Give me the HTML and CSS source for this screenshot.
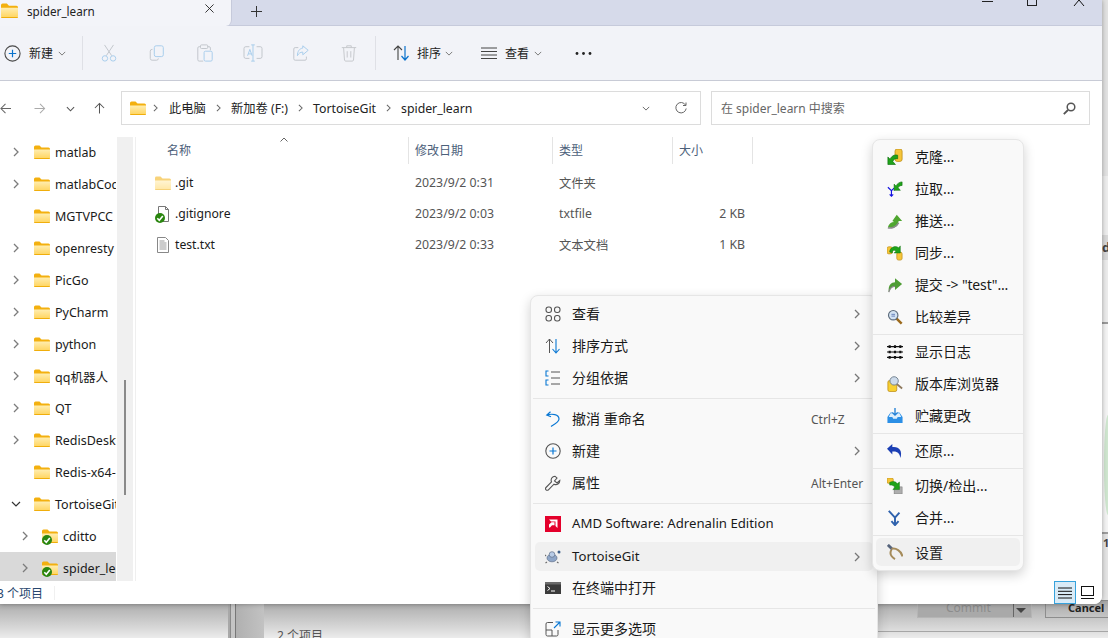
FILE: index.html
```html
<!DOCTYPE html>
<html lang="zh">
<head>
<meta charset="utf-8">
<title>spider_learn</title>
<link rel="stylesheet" href="styles.css">
</head>
<body>
<svg class="defs" aria-hidden="true">
  <defs>
    <linearGradient id="fg" x1="0" y1="0" x2="0" y2="1"><stop offset="0" stop-color="#ffedb0"/><stop offset="1" stop-color="#ffd45c"/></linearGradient>
    <symbol id="folder" viewBox="0 0 16 14"><path d="M0 2A1.500 1.500 0 0 1 1.500.5h4l2 2h7A1.500 1.500 0 0 1 16 4v2H0z" fill="#f3b00f"/><path d="M0 4.500h16V12.500a1.500 1.500 0 0 1-1.500 1.500h-13A1.500 1.500 0 0 1 0 12.500z" fill="url(#fg)"/><path d="M0 13h16a1 1 0 0 1-1 1H1a1 1 0 0 1-1-1z" fill="#f0ae0c"/></symbol>
    <symbol id="badge" viewBox="0 0 10 10"><circle cx="5" cy="5" r="5" fill="#2a860f"/><path d="M2.300 5.200 4.300 7.200 7.800 3.100" fill="none" stroke="#fff" stroke-width="1.600"/></symbol>
    <symbol id="cr" viewBox="0 0 6 10"><path d="M1 1l4 4-4 4" fill="none" stroke="currentColor" stroke-width="1.300"/></symbol>
    <symbol id="dn" viewBox="0 0 10 6"><path d="M1 1l4 4 4-4" fill="none" stroke="currentColor" stroke-width="1.200"/></symbol>
  </defs>
</svg>

<div class="backdrop">
  <div class="bd-side">
    <span class="bd-d">d</span>
    <span class="bd-green"></span>
    <span class="bd-one">1</span>
  </div>
  <div class="bd-bottom">
    <span class="bd-bars"></span>
    <span class="bd-count">2 个项目</span>
    <span class="bd-rule"></span>
    <span class="bd-commit">Commit<span class="bd-split"></span><span class="bd-drop"></span></span>
    <span class="bd-cancel">Cancel</span>
  </div>
</div>

<div class="window">
  <div class="tabbar">
    <div class="tab">
      <svg class="tab-folder"><use href="#folder"/></svg>
      <span class="tab-title">spider_learn</span>
      <svg class="tab-close" viewBox="0 0 10 10"><path d="M.5.500l9 9M9.500.500l-9 9" stroke="#222" fill="none"/></svg>
    </div>
    <svg class="tab-plus" viewBox="0 0 11 11"><path d="M5.500 0v11M0 5.500h11" stroke="#333" fill="none"/></svg>
    <div class="winctl">
      <span class="ctl-min"></span>
      <span class="ctl-max"></span>
      <svg class="ctl-close" viewBox="0 0 12 6"><path d="M1 6 6 0l5 6" stroke="#111" fill="none"/></svg>
    </div>
  </div>

  <div class="toolbar">
    <svg class="ic-new" viewBox="0 0 17 17"><circle cx="8.500" cy="8.500" r="7.600" fill="none" stroke="#4a4a4a" stroke-width="1.100"/><path d="M8.500 4.800v7.400M4.800 8.500h7.400" stroke="#0a72cc" stroke-width="1.200"/></svg>
    <span class="tb-text">新建</span>
    <svg class="tb-dn"><use href="#dn"/></svg>
    <span class="tb-sep tb-sep-a"></span>
    <div class="tb-slot"><svg class="tb-ic" viewBox="0 0 20 20"><path d="M5 1l8 12M15 1 7 13" stroke="#c2c6cc" fill="none" stroke-width="1.100"/><circle cx="5.500" cy="16" r="3" fill="none" stroke="#a9cdec" stroke-width="1.100"/><circle cx="14.500" cy="16" r="3" fill="none" stroke="#a9cdec" stroke-width="1.100"/></svg></div>
    <div class="tb-slot"><svg class="tb-ic" viewBox="0 0 20 20"><rect x="7" y="2" width="10" height="12" rx="2" fill="none" stroke="#a9cdec" stroke-width="1.100"/><path d="M5 6H4.500A2 2 0 0 0 2.500 8v8a2 2 0 0 0 2 2h5a2 2 0 0 0 2-2" fill="none" stroke="#c2c6cc" stroke-width="1.100"/></svg></div>
    <div class="tb-slot"><svg class="tb-ic" viewBox="0 0 20 20"><path d="M5 3H3.500A1.500 1.500 0 0 0 2 4.500v13A1.500 1.500 0 0 0 3.500 19H8M13 3h1.500A1.500 1.500 0 0 1 16 4.500V7" fill="none" stroke="#c2c6cc" stroke-width="1.100"/><rect x="5" y="1" width="8" height="4" rx="1" fill="none" stroke="#c2c6cc" stroke-width="1.100"/><rect x="9" y="8" width="9" height="11" rx="1.500" fill="none" stroke="#a9cdec" stroke-width="1.100"/></svg></div>
    <div class="tb-slot"><svg class="tb-ic-w" viewBox="0 0 22 20"><path d="M7 3H3a2 2 0 0 0-2 2v9a2 2 0 0 0 2 2h4M15 3h4a2 2 0 0 1 2 2v9a2 2 0 0 1-2 2h-4" fill="none" stroke="#c2c6cc" stroke-width="1.100"/><path d="M11 1v18M9 1h4M9 19h4" stroke="#a9cdec" fill="none" stroke-width="1.100"/><path d="M5 13l2.500-7L10 13M6 11h3" stroke="#a9cdec" fill="none" stroke-width="1.100"/></svg></div>
    <div class="tb-slot"><svg class="tb-ic" viewBox="0 0 20 20"><path d="M7 4H3.500A1.500 1.500 0 0 0 2 5.500v11A1.500 1.500 0 0 0 3.500 18h11a1.500 1.500 0 0 0 1.500-1.500V14" fill="none" stroke="#c2c6cc" stroke-width="1.100"/><path d="M12 2l6 5-6 5V9C9 9 7.500 10.500 6 13c0-5 2.500-8 6-8.500z" fill="none" stroke="#a9cdec" stroke-width="1.100"/></svg></div>
    <div class="tb-slot"><svg class="tb-ic" viewBox="0 0 20 20"><path d="M2 4h16M7.500 4V2h5v2M4 4l1 14a1.500 1.500 0 0 0 1.500 1h7a1.500 1.500 0 0 0 1.500-1l1-14M8 8v7M12 8v7" fill="none" stroke="#c6c8cc" stroke-width="1.100"/></svg></div>
    <span class="tb-sep tb-sep-b"></span>
    <svg class="ic-sort" viewBox="0 0 18 18"><path d="M5 16V2M1 6l4-4 4 4" fill="none" stroke="#444" stroke-width="1.100"/><path d="M12 2v14M8.500 12l3.500 4 3.500-4" fill="none" stroke="#0a72cc" stroke-width="1.200"/></svg>
    <span class="tb-text tb-text-sort">排序</span>
    <svg class="tb-dn tb-dn-sort"><use href="#dn"/></svg>
    <svg class="ic-view" viewBox="0 0 16 12"><path d="M0 1h16M0 4.500h16M0 8h16M0 11.500h16" stroke="#444" fill="none"/></svg>
    <span class="tb-text">查看</span>
    <svg class="tb-dn"><use href="#dn"/></svg>
    <svg class="ic-more" viewBox="0 0 17 3"><circle cx="2" cy="1.500" r="1.400" fill="#222"/><circle cx="8.500" cy="1.500" r="1.400" fill="#222"/><circle cx="15" cy="1.500" r="1.400" fill="#222"/></svg>
  </div>

  <div class="navbar">
    <svg class="nav-back" viewBox="0 0 12 12"><path d="M12 6H1M6 1 1 6l5 5" fill="none" stroke="#666" stroke-width="1.100"/></svg>
    <svg class="nav-fwd" viewBox="0 0 12 12"><path d="M0 6h11M6 1l5 5-5 5" fill="none" stroke="#aaa" stroke-width="1.100"/></svg>
    <svg class="nav-down"><use href="#dn"/></svg>
    <svg class="nav-up" viewBox="0 0 12 12"><path d="M6 12V1M1 6l5-5 5 5" fill="none" stroke="#555" stroke-width="1.100"/></svg>
    <div class="address">
      <svg class="addr-folder"><use href="#folder"/></svg>
      <svg class="crumb-cr crumb-cr-first"><use href="#cr"/></svg>
      <span>此电脑</span>
      <svg class="crumb-cr"><use href="#cr"/></svg>
      <span>新加卷 (F:)</span>
      <svg class="crumb-cr"><use href="#cr"/></svg>
      <span>TortoiseGit</span>
      <svg class="crumb-cr"><use href="#cr"/></svg>
      <span>spider_learn</span>
      <svg class="addr-down"><use href="#dn"/></svg>
      <svg class="addr-refresh" viewBox="0 0 12 12"><path d="M10.500 3A5.200 5.200 0 1 0 11.200 6.500M11 .5V3.500H8" fill="none" stroke="#666" stroke-width="1"/></svg>
    </div>
    <div class="search">
      <span class="search-text">在 spider_learn 中搜索</span>
      <svg class="search-ic" viewBox="0 0 13 13"><circle cx="8" cy="5" r="3.800" fill="none" stroke="#555" stroke-width="1.500"/><path d="M5 8 .8 12.200" stroke="#555" stroke-width="1.800"/></svg>
    </div>
  </div>

  <div class="content">
    <div class="sidebar">
      <div class="tree-row"><svg class="tree-cr"><use href="#cr"/></svg><svg class="tree-folder"><use href="#folder"/></svg><span>matlab</span></div>
      <div class="tree-row"><svg class="tree-cr"><use href="#cr"/></svg><svg class="tree-folder"><use href="#folder"/></svg><span>matlabCode</span></div>
      <div class="tree-row"><span class="tree-cr"></span><svg class="tree-folder"><use href="#folder"/></svg><span>MGTVPCC</span></div>
      <div class="tree-row"><svg class="tree-cr"><use href="#cr"/></svg><svg class="tree-folder"><use href="#folder"/></svg><span>openresty</span></div>
      <div class="tree-row"><svg class="tree-cr"><use href="#cr"/></svg><svg class="tree-folder"><use href="#folder"/></svg><span>PicGo</span></div>
      <div class="tree-row"><svg class="tree-cr"><use href="#cr"/></svg><svg class="tree-folder"><use href="#folder"/></svg><span>PyCharm</span></div>
      <div class="tree-row"><svg class="tree-cr"><use href="#cr"/></svg><svg class="tree-folder"><use href="#folder"/></svg><span>python</span></div>
      <div class="tree-row"><svg class="tree-cr"><use href="#cr"/></svg><svg class="tree-folder"><use href="#folder"/></svg><span>qq机器人</span></div>
      <div class="tree-row"><svg class="tree-cr"><use href="#cr"/></svg><svg class="tree-folder"><use href="#folder"/></svg><span>QT</span></div>
      <div class="tree-row"><svg class="tree-cr"><use href="#cr"/></svg><svg class="tree-folder"><use href="#folder"/></svg><span>RedisDesktop</span></div>
      <div class="tree-row"><span class="tree-cr"></span><svg class="tree-folder"><use href="#folder"/></svg><span>Redis-x64-5.0</span></div>
      <div class="tree-row"><svg class="tree-dn"><use href="#dn"/></svg><svg class="tree-folder"><use href="#folder"/></svg><span>TortoiseGit</span></div>
      <div class="tree-row tree-child"><svg class="tree-cr"><use href="#cr"/></svg><span class="badged"><svg class="tree-folder"><use href="#folder"/></svg><svg class="badge"><use href="#badge"/></svg></span><span>cditto</span></div>
      <div class="tree-row tree-child tree-sel"><svg class="tree-cr"><use href="#cr"/></svg><span class="badged"><svg class="tree-folder"><use href="#folder"/></svg><svg class="badge"><use href="#badge"/></svg></span><span>spider_learn</span></div>
    </div>
    <div class="side-scroll"><span class="side-thumb"></span></div>
    <div class="main">
      <div class="list-head">
        <div class="head-name">名称<svg class="sort-caret" viewBox="0 0 8 5"><path d="M.5 4.500 4 1l3.500 3.500" fill="none" stroke="#666"/></svg></div>
        <div class="head-cell">修改日期</div>
        <div class="head-cell">类型</div>
        <div class="head-cell head-last">大小</div>
      </div>
      <div class="list-row">
        <div class="cell-name"><svg class="file-ic file-faded"><use href="#folder"/></svg><span>.git</span></div>
        <div class="cell">2023/9/2 0:31</div><div class="cell">文件夹</div><div class="cell cell-size"></div>
      </div>
      <div class="list-row">
        <div class="cell-name">
          <span class="badged">
            <svg class="file-ic" viewBox="0 0 16 16"><path d="M3.500.5h7l3 3v12h-10z" fill="#fff" stroke="#777"/><path d="M10.500.5v3h3" fill="none" stroke="#777"/></svg>
            <svg class="badge badge-file"><use href="#badge"/></svg>
          </span><span>.gitignore</span>
        </div>
        <div class="cell">2023/9/2 0:03</div><div class="cell">txtfile</div><div class="cell cell-size">2 KB</div>
      </div>
      <div class="list-row">
        <div class="cell-name"><svg class="file-ic" viewBox="0 0 16 16"><path d="M2.500.5h8l3 3v12h-11z" fill="#fff" stroke="#888"/><path d="M4.500 4h5M4.500 6h7M4.500 8h7M4.500 10h7M4.500 12h7" stroke="#999" fill="none"/></svg><span>test.txt</span></div>
        <div class="cell">2023/9/2 0:33</div><div class="cell">文本文档</div><div class="cell cell-size">1 KB</div>
      </div>
    </div>
  </div>

  <div class="statusbar">
    <span class="status-text">3 个项目</span>
    <span class="status-sep"></span>
    <span class="view-btn view-on"><svg viewBox="0 0 14 12" class="view-ic"><path d="M0 1h14M0 4.300h14M0 7.600h14M0 11h14" stroke="#111" fill="none"/></svg></span>
    <span class="view-btn"><svg viewBox="0 0 13 13" class="view-ic2"><rect x=".5" y=".5" width="12" height="9" fill="none" stroke="#111"/><path d="M0 12.500h13" stroke="#111"/></svg></span>
  </div>
</div>

<div class="menu menu-main">
  <div class="mi"><svg class="mi-ic" viewBox="0 0 16 16"><g fill="none" stroke="#555" stroke-width="1.100"><rect x="1" y="1" width="5.500" height="5.500" rx="2.400"/><rect x="9.500" y="1" width="5.500" height="5.500" rx="2.400"/><rect x="1" y="9.500" width="5.500" height="5.500" rx="2.400"/><rect x="9.500" y="9.500" width="5.500" height="5.500" rx="2.400"/></g></svg><span class="mi-text">查看</span><svg class="mi-cr"><use href="#cr"/></svg></div>
  <div class="mi"><svg class="mi-ic" viewBox="0 0 16 16"><path d="M4.500 15V1M1 5l3.500-4L8 5" fill="none" stroke="#555"/><path d="M11 1v14M7.500 11l3.500 4 3.500-4" fill="none" stroke="#0a78d4" stroke-width="1.100"/></svg><span class="mi-text">排序方式</span><svg class="mi-cr"><use href="#cr"/></svg></div>
  <div class="mi"><svg class="mi-ic" viewBox="0 0 16 16"><path d="M6 2h9M6 8h9M6 14h9" stroke="#555" fill="none"/><path d="M3.500 1H1v5h2.500M3.500 10H1v5h2.500" stroke="#0a78d4" fill="none" stroke-width="1.100"/></svg><span class="mi-text">分组依据</span><svg class="mi-cr"><use href="#cr"/></svg></div>
  <div class="mi-sep"></div>
  <div class="mi"><svg class="mi-ic" viewBox="0 0 16 16"><path d="M5.500.8 1.800 4l4.200 1.800M2 4c5-1.500 12-.8 12 4 0 3-4 5-8 7.500" fill="none" stroke="#0a78d4" stroke-width="1.200"/></svg><span class="mi-text">撤消 重命名</span><span class="mi-key">Ctrl+Z</span></div>
  <div class="mi"><svg class="mi-ic" viewBox="0 0 16 16"><circle cx="8" cy="8" r="7.200" fill="none" stroke="#555" stroke-width="1.100"/><path d="M8 4.500v7M4.500 8h7" stroke="#0a78d4" stroke-width="1.200"/></svg><span class="mi-text">新建</span><svg class="mi-cr"><use href="#cr"/></svg></div>
  <div class="mi"><svg class="mi-ic" viewBox="0 0 16 16"><path d="M10 1.200A4 4 0 0 0 6.500 6.800L1 12.500a1.600 1.600 0 0 0 2.400 2.300L9 9.200a4 4 0 0 0 5.800-3.700L12 8 9.500 6 12 3z" fill="none" stroke="#555" stroke-width="1.100"/></svg><span class="mi-text">属性</span><span class="mi-key">Alt+Enter</span></div>
  <div class="mi-sep"></div>
  <div class="mi"><svg class="mi-ic" viewBox="0 0 16 16"><rect width="16" height="16" fill="#e4002b"/><path d="M4 3.500h8.500V12L10.500 10V5.500H6zM4 8.500 6.500 6.300h3v3H7L5 11.500H4z" fill="#fff"/></svg><span class="mi-text mi-latin">AMD Software: Adrenalin Edition</span></div>
  <div class="mi mi-hover"><svg class="mi-ic" viewBox="0 0 16 16"><ellipse cx="7" cy="9" rx="5" ry="3.800" fill="#8ea6c8" stroke="#5e6f88" stroke-width=".7"/><circle cx="7" cy="5.500" r="2.800" fill="#b7cbe6" stroke="#5e6f88" stroke-width=".7"/><path d="M1 7 0 6M2 13l-1.500 1M12 13l1.500 1" stroke="#6a6a6a" stroke-width="1.200"/><circle cx="14" cy="3" r="1.500" fill="#3e5f8a"/></svg><span class="mi-text mi-latin">TortoiseGit</span><svg class="mi-cr"><use href="#cr"/></svg></div>
  <div class="mi"><svg class="mi-ic" viewBox="0 0 16 12"><rect width="16" height="12" fill="#3b3b3b"/><rect width="16" height="2.500" fill="#6b6b6b"/><path d="M2.500 4.500 5 6.500l-2.500 2M6 9h4" stroke="#fff" fill="none"/></svg><span class="mi-text">在终端中打开</span></div>
  <div class="mi-sep"></div>
  <div class="mi"><svg class="mi-ic" viewBox="0 0 16 16"><path d="M8 1.500H2.500a1.500 1.500 0 0 0-1.500 1.500V13.500A1.500 1.500 0 0 0 2.500 15h9a1.500 1.500 0 0 0 1.500-1.500V9M1 9h6v6" fill="none" stroke="#555"/><path d="M9 7l6-6M10.500 1H15v4.500" fill="none" stroke="#0a78d4" stroke-width="1.100"/></svg><span class="mi-text">显示更多选项</span></div>
</div>

<div class="menu menu-sub">
  <div class="si"><svg class="si-ic" viewBox="0 0 18 18"><rect x="9" y="0" width="8" height="14" rx="2.500" fill="#f5c53a" stroke="#b8860b" stroke-width=".8"/><path d="M1 17.500V9L3.500 11.500C5 8 8 6 12 7V11C9 10.500 7.500 11.500 6.500 14L9.500 17.500Z" fill="#1fa31a" stroke="#0a6a0a" stroke-width=".7"/></svg><span>克隆...</span></div>
  <div class="si"><svg class="si-ic" viewBox="0 0 18 18"><path d="M1 7l4 4 3-3M5 11v6M3 15l2 2 2-2" fill="none" stroke="#1414e0" stroke-width="1.300"/><path d="M8 11V3.500L10 5.500C11.500 3 14 1 17 1V5C15 5 13.500 6 12.500 7.500L15 10.500H8Z" fill="#1fa31a" stroke="#0a6a0a" stroke-width=".6"/></svg><span>拉取...</span></div>
  <div class="si"><svg class="si-ic" viewBox="0 0 18 18"><path d="M1 16C2 12 5 10 8 10L6 9 11 2 17 9H13C13 13 10 17 5 17Z" fill="#4fa62f"/><path d="M1 16.500C4 17.500 10 17 13 11" fill="none" stroke="#8a8a8a" stroke-width="1.800"/></svg><span>推送...</span></div>
  <div class="si"><svg class="si-ic" viewBox="0 0 18 18"><rect x="0" y="2" width="6" height="8" rx="2" fill="#f5c53a" stroke="#b8860b" stroke-width=".7"/><rect x="11" y="8" width="6" height="9" rx="2" fill="#f5c53a" stroke="#b8860b" stroke-width=".7"/><path d="M3 8C3 3 9 0 13 3L15 1V9H8L10 7C8 5 6 6 6 9Z" fill="#1fa31a" stroke="#0a6a0a" stroke-width=".5"/></svg><span>同步...</span></div>
  <div class="si"><svg class="si-ic" viewBox="0 0 18 18"><path d="M2 17C1 9 5 6 9 6V1.500L17 8 9 14.500V10.500C6 10.500 4 12.500 2 17Z" fill="#4f9d35"/><path d="M2 17C3 13 6 10.500 9 10.500" fill="none" stroke="#888" stroke-width="1.500"/></svg><span class="si-tight">提交 -&gt; "test"...</span></div>
  <div class="si"><svg class="si-ic" viewBox="0 0 18 18"><path d="M10 10l6.500 6.500" stroke="#9c6a1c" stroke-width="2.800"/><circle cx="7" cy="7" r="5.300" fill="#d3e3f3" stroke="#5d6c7c" stroke-width="1.300"/><path d="M5 6h4M5 8h4" stroke="#5b78b4"/></svg><span>比较差异</span></div>
  <div class="si-sep"></div>
  <div class="si"><svg class="si-ic" viewBox="0 0 18 18"><path d="M0 3h18M0 9h18M0 15h18" stroke="#111" stroke-width="1.300" fill="none"/><path d="M3 1.500v3M9 1.500v3M15 1.500v3M3 7.500v3M9 7.500v3M15 7.500v3M3 13.500v3M9 13.500v3M15 13.500v3" stroke="#111" stroke-width="2.400" fill="none"/></svg><span>显示日志</span></div>
  <div class="si"><svg class="si-ic" viewBox="0 0 18 18"><rect x="1" y="5" width="10" height="12.500" rx="2" fill="#f8d030" stroke="#b8860b" stroke-width=".8"/><path d="M11 9l6 5" stroke="#8f7a5e" stroke-width="2"/><circle cx="8" cy="5.500" r="4.700" fill="#cddbeb" stroke="#74828f" stroke-width="1.100"/></svg><span>版本库浏览器</span></div>
  <div class="si"><svg class="si-ic" viewBox="0 0 18 18"><path d="M.5 10 4 5h2v3h6V5h2l3.500 5v7H.5z" fill="#2b8fe6"/><path d="M4 6H14L16 10H12L11 12H7L6 10H2Z" fill="#dceefc"/><path d="M9 0v8M6 5 9 8l3-3" stroke="#1f7fd6" stroke-width="1.500" fill="none"/></svg><span>贮藏更改</span></div>
  <div class="si-sep"></div>
  <div class="si"><svg class="si-ic" viewBox="0 0 18 18"><path d="M0 6.500 6 1V4.500C13 3.500 18 8 15 17 14.500 11.500 12 9 6 9.500V13Z" fill="#1b3fb4"/></svg><span>还原...</span></div>
  <div class="si-sep"></div>
  <div class="si"><svg class="si-ic" viewBox="0 0 18 18"><rect x="0" y="0" width="7" height="6" rx="1.500" fill="#f5c53a" stroke="#b8860b" stroke-width=".7"/><rect x="8" y="10" width="9" height="8" fill="#aeaeae" stroke="#777" stroke-width=".6"/><path d="M3 5C7 3 10 4 11.500 6.500L14 4.500V13H6.500L9 10.500C8 8.500 6 8 3 8Z" fill="#1fa31a" stroke="#0a6a0a" stroke-width=".5"/></svg><span>切换/检出...</span></div>
  <div class="si"><svg class="si-ic" viewBox="0 0 18 18"><path d="M2 1 9 8.500 14 3M9 8v8M5 12.500 9 17l4-4.500" fill="none" stroke="#2f62ad" stroke-width="2.200"/></svg><span>合并...</span></div>
  <div class="si-sep"></div>
  <div class="si si-hover"><svg class="si-ic" viewBox="0 0 18 18"><path d="M1 1 6 6" stroke="#56647c" stroke-width="3.200"/><path d="M5 5.500C10 4 16 8 17.500 14M5 6.500C3 10 4 14 9 17" fill="none" stroke="#a58b5a" stroke-width="2.200"/></svg><span>设置</span></div>
</div>
</body>
</html>
```
FILE: styles.css
```css
* { box-sizing: border-box; }
html, body { margin: 0; padding: 0; height: 100%; overflow: hidden; }
body {
  position: relative;
  width: 1108px;
  height: 638px;
  font-family: "Noto Sans", "Noto Sans CJK SC", sans-serif;
  font-size: 12px;
  color: #1a1a1a;
  background: #e6e6e6;
}
svg { display: block; flex: none; }
.defs { position: absolute; width: 0; height: 0; }

/* desktop behind the window */
.backdrop { position: absolute; inset: 0; overflow: hidden; }
.bd-side {
  position: absolute; left: 1102px; top: 0; width: 6px; height: 604px;
  background: linear-gradient(#e2e2e2 0, #e2e2e2 176px, #ededed 176px, #ededed 235px, #d8d8d8 235px, #d8d8d8 260px, #ececec 260px, #ececec 322px, #9b9b9b 322px, #9b9b9b 324px, #f4f4f4 324px, #f4f4f4 532px, #9e9e9e 532px, #9e9e9e 534px, #e4e4e4 534px);
}
.bd-d { position: absolute; left: 0; top: 238px; font-size: 13px; font-weight: 700; color: #444; }
.bd-green { position: absolute; left: 2px; top: 415px; width: 8px; height: 100px; background: #cfe6cf; border-radius: 50%; }
.bd-one { position: absolute; left: 1px; top: 535px; font-size: 11px; font-weight: 700; color: #444; }
.bd-bottom {
  position: absolute; left: 0; right: 0; top: 600px; height: 38px;
  background: linear-gradient(#a2a2a2 0, #b8b8b8 10px, #d8d8d8 28px, #ececec 100%);
}
.bd-bars {
  position: absolute; left: 228px; top: 0; width: 36px; height: 38px;
  background: linear-gradient(90deg, #a8a8a8 0, #a8a8a8 2px, #8a8a8a 2px, #8a8a8a 3px, #c4c4c4 3px, #c4c4c4 7px, #777 7px, #777 8px, #b0b0b0 8px, #c2c2c2 100%);
}
.bd-count { position: absolute; left: 277px; top: 26px; font-size: 12px; color: #555; }
.bd-rule { position: absolute; left: 878px; right: 0; top: 31px; height: 1px; background: #a6a6a6; }
.bd-commit {
  position: absolute; left: 917px; top: 0; width: 115px; height: 18px; padding-left: 28px;
  background: #a9a9a9; border: 1px solid #b5b5b5; color: #8c8c8c; font-size: 12px; line-height: 14px;
}
.bd-split { position: absolute; left: 95px; top: 0; width: 1px; height: 16px; background: #666; }
.bd-drop { position: absolute; left: 98px; top: 7px; width: 0; height: 0; border: 5px solid transparent; border-top-color: #444; border-bottom: 0; }
.bd-cancel {
  position: absolute; left: 1045px; top: 0; width: 70px; height: 18px; padding-left: 22px;
  border: 1px solid #8d8d8d; color: #222; font-size: 11px; font-weight: 700; line-height: 14px; white-space: nowrap;
}

/* explorer window */
.window {
  position: absolute; left: 0; top: 0; width: 1102px; height: 604px;
  display: flex; flex-direction: column; overflow: hidden;
  background: #fff; border-bottom-right-radius: 8px;
  box-shadow: 0 0 5px rgba(0,0,0,.35);
}
.tabbar { position: relative; display: flex; align-items: center; height: 26px; flex: none; background: #d6daea; border-bottom: 1px solid #c6cadb; }
.tab { display: flex; align-items: center; width: 232px; height: 26px; background: #f3f4f9; border-bottom-right-radius: 6px; border-right: 1px solid #c6cadb; }
.tab-folder { width: 17px; height: 15px; margin-left: 1px; margin-top: -5px; }
.tab-title { margin-left: 9px; margin-top: -4px; font-size: 11.700px; color: #222; }
.tab-close { width: 9px; height: 9px; margin-left: auto; margin-right: 17px; margin-top: -8px; }
.tab-plus { width: 11px; height: 11px; margin-left: 19px; margin-top: -3px; }
.winctl { margin-left: auto; display: flex; align-self: flex-start; }
.ctl-min { width: 11px; height: 1px; margin-top: 1px; background: #222; margin-right: 34px; }
.ctl-max { width: 10px; height: 6px; border: 1px solid #222; border-top: 0; margin-right: 36px; }
.ctl-close { width: 12px; height: 6px; margin-right: 17px; }

.toolbar { display: flex; align-items: center; height: 55px; flex: none; padding-left: 4px; background: #f2f3f8; border-bottom: 1px solid #c8cbd6; }
.ic-new { width: 17px; height: 17px; }
.tb-text { margin-left: 8px; font-size: 12px; color: #222; white-space: nowrap; }
.tb-text-sort { margin-left: 6px; }
.tb-dn { width: 8px; height: 5px; margin-left: 5px; color: #777; }
.tb-dn-sort { margin-left: 4px; }
.tb-sep { width: 1px; height: 34px; background: #dfe0e6; }
.tb-sep-a { margin-left: 16px; margin-right: 2px; }
.tb-sep-b { margin-left: 2px; }
.tb-slot { width: 48px; display: flex; justify-content: center; }
.tb-ic { width: 18px; height: 18px; }
.tb-ic-w { width: 20px; height: 18px; }
.ic-sort { width: 18px; height: 18px; margin-left: 17px; }
.ic-view { width: 16px; height: 12px; margin-left: 28px; }
.ic-more { width: 17px; height: 3px; margin-left: 33px; }

.navbar { display: flex; align-items: flex-start; height: 55px; flex: none; padding-top: 10px; }
.nav-back { width: 11px; height: 11px; margin-top: 12px; }
.nav-fwd { width: 12px; height: 11px; margin-top: 12px; margin-left: 23px; }
.nav-down { width: 9px; height: 6px; margin-top: 15px; margin-left: 20px; color: #555; }
.nav-up { width: 11px; height: 12px; margin-top: 11px; margin-left: 19px; }
.address { display: flex; align-items: center; width: 580px; height: 34px; margin-left: 16px; padding-left: 8px; border: 1px solid #dcdcdc; color: #222; white-space: nowrap; font-size: 12.300px; }
.addr-folder { width: 16px; height: 14px; }
.crumb-cr { width: 5px; height: 8px; margin: 0 10px; color: #666; }
.crumb-cr-first { margin-left: 7px; margin-right: 11px; }
.addr-down { width: 8px; height: 5px; margin-left: auto; color: #666; }
.addr-refresh { width: 12px; height: 12px; margin-left: 25px; margin-right: 13px; }
.search { display: flex; align-items: center; width: 379px; height: 34px; margin-left: 10px; padding: 0 13px 0 9px; border: 1px solid #dcdcdc; }
.search-text { color: #666; white-space: nowrap; }
.search-ic { width: 13px; height: 13px; margin-left: auto; }

.content { display: flex; flex: 1; min-height: 0; }
.sidebar { width: 116px; flex: none; overflow: hidden; }
.tree-row { display: flex; align-items: center; height: 32px; white-space: nowrap; font-size: 12.500px; color: #1a1a1a; overflow: hidden; }
.tree-cr { width: 6px; height: 10px; margin-left: 13px; color: #7c7c7c; flex: none; }
.tree-dn { width: 10px; height: 6px; margin-left: 11px; margin-right: -2px; color: #333; flex: none; }
.tree-folder { width: 16px; height: 14px; margin-left: 15px; }
.tree-row > span:last-child { margin-left: 5px; }
.tree-child .tree-cr { margin-left: 22px; }
.tree-child .tree-folder { margin-left: 0; }
.badged { position: relative; display: block; flex: none; }
.tree-child .badged { margin-left: 14px; }
.tree-sel { background: #d9d9d9; }
.badge { position: absolute; left: 0; top: 6px; width: 10px; height: 10px; }
.side-scroll { position: relative; width: 16px; margin: 1px 0 0 1px; background: #f0f0f0; flex: none; }
.side-thumb { position: absolute; left: 7px; top: 243px; width: 2px; height: 115px; background: #8a8a8a; }
.main { flex: 1; margin: 1px 0 0 2px; border-left: 1px solid #efefef; min-width: 0; }
.list-head, .list-row { display: grid; grid-template-columns: 272px 144px 120px 81px; }
.list-head { height: 27px; margin-bottom: 3px; color: #4c607a; align-items: stretch; }
.head-name { position: relative; padding: 4px 0 0 31px; }
.sort-caret { position: absolute; left: 144px; top: 0; width: 8px; height: 5px; }
.head-cell { padding: 4px 0 0 6px; border-left: 1px solid #e4e4e4; }
.head-last { border-right: 1px solid #e4e4e4; }
.list-row { height: 31px; align-items: center; color: #555; }
.cell-name { display: flex; align-items: center; padding-left: 19px; color: #1a1a1a; font-size: 12.200px; }
.cell-name > span:last-child { margin-left: 4px; }
.file-ic { width: 16px; height: 16px; }
.file-faded { height: 14px; opacity: .55; }
.badge-file { top: 7px; }
.cell { padding-left: 7px; white-space: nowrap; font-size: 12.300px; }
.cell-size { padding: 0 8px 0 0; text-align: right; }

.statusbar { display: flex; align-items: center; height: 23px; flex: none; padding-right: 4px; background: #fff; }
.status-text { margin-left: -3px; color: #27466e; white-space: nowrap; }
.status-sep { width: 1px; height: 14px; margin-left: 11px; margin-right: auto; background: #f0f0f0; }
.view-btn { display: flex; align-items: center; justify-content: center; width: 22px; height: 23px; }
.view-on { background: #d9ebf7; border: 1px solid #36a2dc; }
.view-ic { width: 14px; height: 12px; }
.view-ic2 { width: 13px; height: 13px; }

/* context menus */
.menu {
  position: absolute; background: #f9f9f9; border: 1px solid #e6e6e6; border-radius: 8px;
  box-shadow: 0 4px 12px rgba(0,0,0,.18);
  color: #1a1a1a; font-size: 14px; white-space: nowrap;
}
.menu-main { left: 530px; top: 295px; width: 348px; padding: 2px 4px 0; }
.menu-sub { left: 872px; top: 139px; width: 152px; padding: 1px 3px 2px; }
.mi { display: flex; align-items: center; height: 32px; padding-left: 10px; padding-right: 13px; border-radius: 5px; }
.mi-ic { width: 16px; height: 16px; }
.mi-text { margin-left: 11px; margin-top: -2px; }
.mi-latin { font-size: 13.200px; }
.mi-cr { width: 6px; height: 10px; margin-left: auto; color: #777; }
.mi-key { margin-left: auto; margin-right: -2px; width: 51px; font-size: 12px; color: #555; }
.mi-hover { background: #f0f0f0; height: 29px; margin: 2px 0 1px; }
.mi-sep { height: 1px; margin: 4px -2px; background: #e6e6e6; }
.si { display: flex; align-items: center; height: 32px; padding-left: 11px; border-radius: 5px; }
.si > span { margin-top: -2px; }
.si-tight { letter-spacing: -.15px; }
.si-ic { width: 16px; height: 16px; margin-right: 12px; }
.si-hover { background: #f0f0f0; height: 28px; margin: 2px 0; }
.si-hover > span { margin-top: 0; }
.si-sep { height: 1px; margin: 1px -3px; background: #e6e6e6; }
```
